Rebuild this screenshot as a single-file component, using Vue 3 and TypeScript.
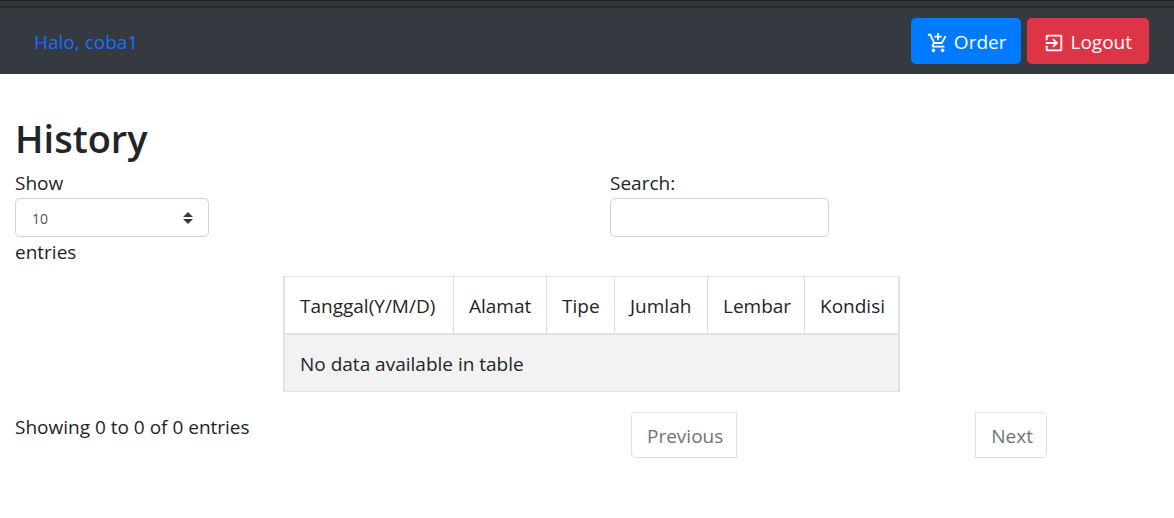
<script setup lang="ts">
import { ref } from 'vue'

const pageSize = ref('10')
const search = ref('')
const columns = [
  { name: 'Tanggal(Y/M/D)', key: 'date' },
  { name: 'Alamat', key: 'address' },
  { name: 'Tipe', key: 'type' },
  { name: 'Jumlah', key: 'amount' },
  { name: 'Lembar', key: 'sheets' },
  { name: 'Kondisi', key: 'state' },
]
</script>

<template>
  <div class="page">
    <div class="strip"></div>
    <nav class="navbar">
      <a class="brand" href="#">Halo, coba1</a>
      <div class="actions">
        <button class="btn primary" type="button">
          <svg class="icon" viewBox="0 0 24 24" aria-hidden="true">
            <path d="M11 9h2V6h3V4h-3V1h-2v3H8v2h3v3zm-4 9c-1.1 0-1.99.9-1.99 2S5.9 22 7 22s2-.9 2-2-.9-2-2-2zm10 0c-1.1 0-1.99.9-1.99 2s.89 2 1.99 2 2-.9 2-2-.9-2-2-2zm-9.83-3.25l.03-.12.9-1.63h7.45c.75 0 1.41-.41 1.75-1.03l3.86-7.01L19.42 4h-.01l-1.1 2-2.76 5H8.53l-.13-.27L6.16 6l-.95-2-.94-2H1v2h2l3.6 7.59-1.35 2.45c-.16.28-.25.61-.25.96 0 1.1.9 2 2 2h12v-2H7.42c-.13 0-.25-.11-.25-.25z" />
          </svg>
          <span>Order</span>
        </button>
        <button class="btn danger" type="button">
          <svg class="icon" viewBox="0 0 24 24" aria-hidden="true">
            <path d="M10.09 15.59L11.5 17l5-5-5-5-1.41 1.41L12.67 11H3v2h9.67l-2.58 2.59zM19 3H5c-1.11 0-2 .9-2 2v4h2V5h14v14H5v-4H3v4c0 1.1.89 2 2 2h14c1.1 0 2-.9 2-2V5c0-1.1-.9-2-2-2z" />
          </svg>
          <span>Logout</span>
        </button>
      </div>
    </nav>

    <main class="content">
      <h1>History</h1>

      <div class="columns">
        <label class="field" for="page-size">
          <span>Show</span>
          <span class="select-wrap">
            <select id="page-size" v-model="pageSize">
              <option>10</option>
              <option>25</option>
              <option>50</option>
              <option>100</option>
            </select>
            <svg class="arrows" viewBox="0 0 10 12" aria-hidden="true">
              <path d="M5 0l5 5H0zM5 12L0 7h10z" />
            </svg>
          </span>
          <span>entries</span>
        </label>
        <label class="field" for="search">
          <span>Search:</span>
          <input id="search" v-model="search" type="search" />
        </label>
      </div>

      <div class="table-area">
        <table>
          <colgroup>
            <col v-for="c in columns" :key="c.key" :class="c.key" />
          </colgroup>
          <thead>
            <tr>
              <th v-for="c in columns" :key="c.key" scope="col">{{ c.name }}</th>
            </tr>
          </thead>
          <tbody>
            <tr>
              <td :colspan="columns.length">No data available in table</td>
            </tr>
          </tbody>
        </table>
      </div>

      <div class="columns">
        <div class="info" role="status">Showing 0 to 0 of 0 entries</div>
        <div class="pager">
          <button class="page-link previous" type="button">Previous</button>
          <button class="page-link next" type="button">Next</button>
        </div>
      </div>
    </main>
  </div>
</template>

<style>
body {
  margin: 0;
  background: #fff;
}
</style>

<style scoped>
.page,
.page * {
  box-sizing: border-box;
}
.page {
  color: #212529;
  font-family: 'Segoe UI', 'Open Sans', 'Noto Sans', sans-serif;
  font-size: 19px;
  line-height: 30px;
}
button,
input,
select {
  font: inherit;
  margin: 0;
}
.strip {
  height: 8px;
  background: #353638;
  border-top: 1px solid #202124;
  border-bottom: 2px solid #28292b;
}
.navbar {
  display: flex;
  align-items: center;
  justify-content: space-between;
  padding: 10px 25px 10px 34px;
  background: #343a40;
}
.brand {
  padding-top: 2px;
  color: #1a6dff;
  text-decoration: none;
}
.actions {
  display: flex;
  gap: 6px;
}
.btn {
  display: flex;
  align-items: center;
  gap: 5px;
  padding: 9px 15px 7px 16px;
  border: 0;
  border-radius: 5px;
  color: #fff;
  white-space: nowrap;
}
.primary {
  background: #007bff;
}
.danger {
  padding-right: 17px;
  background: #dc3545;
}
.icon {
  width: 22px;
  height: 22px;
  margin-top: 2px;
  fill: currentColor;
}
.content {
  padding: 40px 15px;
}
h1 {
  margin: 0 0 6px;
  font-size: 38px;
  line-height: 48px;
  font-weight: 600;
}
.columns {
  display: grid;
  grid-template-columns: 595fr 549fr;
}
.field {
  display: flex;
  flex-direction: column;
  align-items: flex-start;
}
.select-wrap {
  display: grid;
  align-items: center;
  width: 194px;
}
.select-wrap > * {
  grid-area: 1 / 1;
}
select,
input {
  height: 39px;
  border: 1px solid #ced4da;
  border-radius: 5px;
  background: #fff;
  color: #495057;
  font-size: 14px;
  appearance: none;
  outline: none;
}
select {
  width: 100%;
  padding: 2px 32px 0 16px;
}
.arrows {
  width: 10px;
  height: 12px;
  margin-right: 16px;
  justify-self: end;
  fill: #343a40;
  pointer-events: none;
}
input {
  width: 219px;
  padding: 4px 12px;
}
.table-area {
  display: flex;
  justify-content: center;
  padding: 9px 0 20px 9px;
}
table {
  table-layout: fixed;
  width: 617px;
  border: 1px solid #dee2e6;
  border-width: 0 1px;
  border-collapse: separate;
  border-spacing: 0;
}
.address,
.amount {
  width: 93px;
}
.type {
  width: 68px;
}
.date {
  width: 170px;
}
.sheets {
  width: 97px;
}
th,
td {
  padding: 14px 15px 12px;
  border: 0 solid #dee2e6;
  text-align: left;
  font-weight: 400;
  white-space: nowrap;
}
th {
  height: 59px;
  border-width: 1px 1px 2px 0;
}
th:first-child,
td {
  border-left-width: 1px;
}
td {
  height: 57px;
  border-right-width: 1px;
  border-bottom-width: 1px;
  background: #f2f2f2;
}
.pager {
  display: flex;
  gap: 238px;
  padding-left: 21px;
}
.page-link {
  height: 46px;
  padding: 3px 13px 1px 15px;
  border: 1px solid #dee2e6;
  background: #fff;
  color: #6c757d;
}
.previous {
  border-radius: 5px 0 0 5px;
}
.next {
  border-radius: 0 5px 5px 0;
}
</style>
